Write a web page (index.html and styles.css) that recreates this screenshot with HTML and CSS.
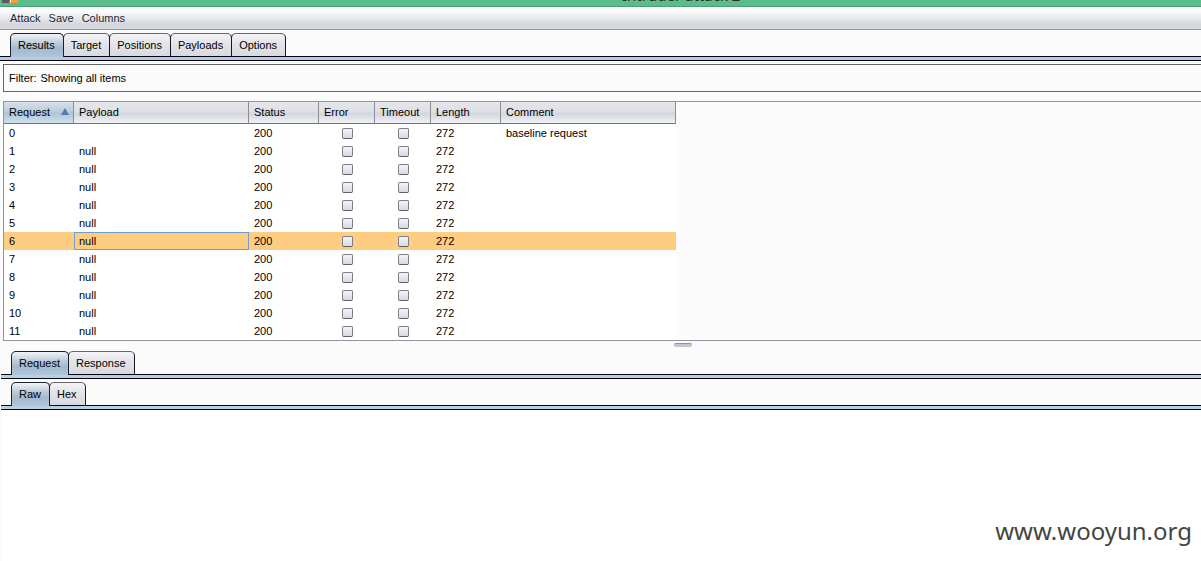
FILE: index.html
```
<!DOCTYPE html>
<html lang="en">
<head>
    <meta charset="UTF-8">
    <meta name="viewport" content="width=device-width, initial-scale=1.0">
    <title>Intruder attack 2</title>
    <link rel="stylesheet" href="styles.css">
</head>
<body>
    <header class="titlebar">
        <svg class="logo" width="16" height="3" viewBox="0 0 16 3">
            <path d="M0 0h9L8 3H0z" fill="#5a5a5a"/>
            <path d="M8 0h1.500L8.500 3H7.500z" fill="#fff"/>
            <path d="M9.500 0H16v3H8.500z" fill="#ff9a33"/>
        </svg>
        <h1 class="title">Intruder attack 2</h1>
    </header>
    <nav class="menubar">
        <button type="button">Attack</button>
        <button type="button">Save</button>
        <button type="button">Columns</button>
    </nav>

    <div class="tabs" role="tablist">
        <button type="button" role="tab" class="tab active" aria-selected="true">Results</button>
        <button type="button" role="tab" class="tab">Target</button>
        <button type="button" role="tab" class="tab">Positions</button>
        <button type="button" role="tab" class="tab">Payloads</button>
        <button type="button" role="tab" class="tab">Options</button>
    </div>
    <div class="strip"></div>

    <main>
        <button type="button" class="filter"><span>Filter:</span><span>Showing all items</span></button>
        <div class="results">
            <table>
                <colgroup>
                    <col class="c-request">
                    <col class="c-payload">
                    <col class="c-status">
                    <col class="c-flag">
                    <col class="c-flag">
                    <col class="c-length">
                    <col class="c-comment">
                </colgroup>
                <thead>
                    <tr>
                        <th class="sorted">
                            <div class="sort">Request
                                <svg width="8" height="7" viewBox="0 0 8 7"><path d="M4 0L8 7H0z" fill="#4d7cae"/></svg>
                            </div>
                        </th>
                        <th>Payload</th>
                        <th>Status</th>
                        <th>Error</th>
                        <th>Timeout</th>
                        <th>Length</th>
                        <th>Comment</th>
                    </tr>
                </thead>
                <tbody id="rows"></tbody>
            </table>
        </div>
    </main>
    <div class="splitter"><span></span></div>

    <div class="lower">
        <div class="tabs" role="tablist">
            <button type="button" role="tab" class="tab active" aria-selected="true">Request</button>
            <button type="button" role="tab" class="tab">Response</button>
        </div>
        <div class="strip"></div>
        <div class="tabs" role="tablist">
            <button type="button" role="tab" class="tab active" aria-selected="true">Raw</button>
            <button type="button" role="tab" class="tab">Hex</button>
        </div>
        <div class="strip"></div>
        <div class="raw"></div>
    </div>
    <div class="watermark">www.wooyun.org</div>

    <script>
        var rows=document.getElementById("rows");
        var selected=6;
        var html="";
        for(var i=0;i<12;i++){
            html+='<tr'+(i==selected?' class="selected"':'')+'>'
                +'<td>'+i+'</td>'
                +'<td>'+(i==0?'':'null')+'</td>'
                +'<td>200</td>'
                +'<td class="flag"><input type="checkbox" aria-label="Error '+i+'"></td>'
                +'<td class="flag"><input type="checkbox" aria-label="Timeout '+i+'"></td>'
                +'<td>272</td>'
                +'<td>'+(i==0?'baseline request':'')+'</td>'
                +'</tr>';
        }
        rows.innerHTML=html;
    </script>
</body>
</html>
```
FILE: styles.css
```
*{
    margin: 0;
    padding: 0;
    box-sizing: border-box;
}
html{
    height: 100%;
}
body{
    min-height: 100%;
    display: flex;
    flex-direction: column;
    position: relative;
    overflow: hidden;
    background: #fbfbfb;
    color: #000;
    font: 11px/18px "Liberation Sans", Arial, sans-serif;
}
button{
    font: inherit;
    color: inherit;
    background: none;
    border: 0;
}
.titlebar{
    height: 7px;
    flex: none;
    display: flex;
    align-items: flex-start;
    overflow: hidden;
    background: #5bbd8b;
    border-bottom: 1px solid #4c9c74;
    padding-left: 2px;
}
.logo{
    flex: none;
}
.title{
    margin: -15px 0 0 604px;
    font: 15px/20px "Noto Sans", sans-serif;
    color: #2b2b2b;
    white-space: nowrap;
}
.menubar{
    height: 23px;
    flex: none;
    display: flex;
    align-items: center;
    gap: 8px;
    padding-left: 10px;
    color: #232830;
    background: linear-gradient(#fbfbfb 20%, #d4d6de 80%, #d8dae1);
    border-bottom: 1px solid #9295a1;
}
.tabs{
    display: flex;
    flex: none;
    padding: 3px 0 0 10px;
}
.tab{
    height: 23px;
    padding: 0 8px 0 7px;
    line-height: 22px;
    border: 1px solid #17171f;
    border-top-color: #66666f;
    border-bottom: 0;
    border-radius: 5px 5px 0 0;
    background: linear-gradient(#f4f4f6, #e4e5ea 40%, #d8dae1);
}
.tab + .tab{
    margin-left: -1px;
}
.tab.active{
    position: relative;
    height: 24px;
    padding-bottom: 1px;
    margin-bottom: -1px;
    border-color: #17222e;
    background: linear-gradient(#f0f4f8, #bccad8 40%, #a3b9cd 65%, #b0c6da);
}
.strip{
    height: 5px;
    flex: none;
    background: #b8cbe4;
    border: solid #05050f;
    border-width: 1px 0;
}
main{
    padding: 3px 0 0 3px;
}
.filter{
    display: flex;
    align-items: center;
    gap: 4px;
    width: 100%;
    height: 28px;
    padding-left: 5px;
    border: 1px solid #666;
    border-right: 0;
}
.results{
    margin-top: 9px;
    border: 1px solid #9295a1;
    border-right: 0;
}
table{
    width: 672px;
    table-layout: fixed;
    border-collapse: separate;
    border-spacing: 0;
    background: #fff;
}
.c-request, .c-status, .c-length{
    width: 70px;
}
.c-payload, .c-comment{
    width: 175px;
}
.c-flag{
    width: 56px;
}
th{
    height: 22px;
    padding: 0 0 2px 5px;
    font-weight: normal;
    text-align: left;
    background: linear-gradient(#e6e7eb, #dfe0e6 45%, #d4d6de 55%, #f0f1f5);
    border-right: 1px solid #8b8e98;
    border-bottom: 1px solid #6f727c;
}
th.sorted{
    background: linear-gradient(#d5e1ea, #bccdda 45%, #afc4d4 55%, #cfe1ee);
}
.sort{
    display: flex;
    align-items: center;
    justify-content: space-between;
    padding-right: 4px;
}
td{
    height: 18px;
    padding-left: 5px;
}
.flag{
    padding-left: 1px;
    text-align: center;
}
.flag input{
    appearance: none;
    display: block;
    width: 11px;
    height: 11px;
    margin: 1px auto 0;
    border: 1px solid #7b7e88;
    border-bottom-color: #5b5e68;
    border-radius: 2px;
    background: linear-gradient(#f4f5f8, #d8dae2);
}
.selected{
    background: #ffcd82;
}
.selected td:nth-child(2){
    outline: 1px solid #6f9fd0;
    outline-offset: -1px;
}
.splitter{
    height: 7px;
    flex: none;
    padding: 2px 0 0 674px;
}
.splitter span{
    display: block;
    width: 18px;
    height: 4px;
    border-radius: 2px;
    background: #c4c7d2;
    border-top: 1px solid #8f919c;
}
.lower{
    flex: 1;
    display: flex;
    flex-direction: column;
    margin-left: 1px;
}
.lower .strip{
    background: #b8d0e4;
}
.raw{
    flex: 1;
    background: #fff;
}
.watermark{
    position: absolute;
    right: 9px;
    bottom: 13px;
    font: 24px/34px "Noto Sans", sans-serif;
    color: #444;
}
```
